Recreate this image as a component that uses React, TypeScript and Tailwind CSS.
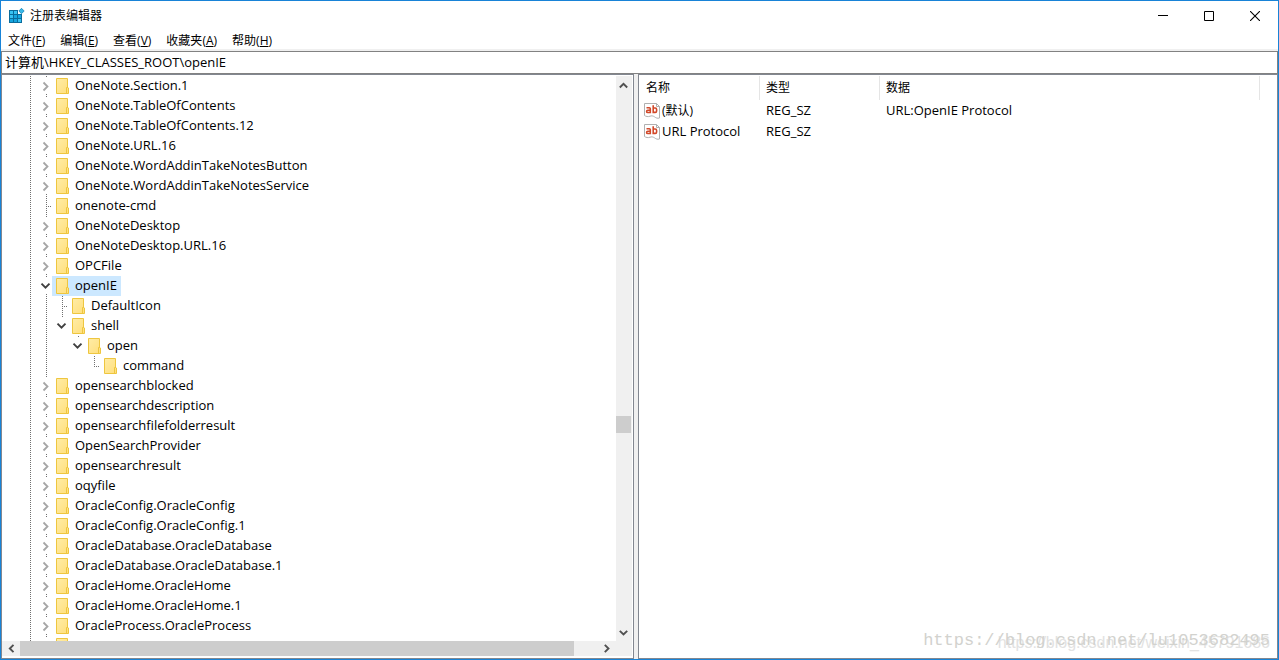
import React from 'react'

type Rail = 'line' | 'tee' | 'elbow' | 'closed' | 'open' | 'lastOpen' | 'blank'

interface KeyNode {
  name: string
  rails: Rail[]
  selected?: boolean
}

const closed = (name: string): KeyNode => ({ name, rails: ['closed'] })

const nodes: KeyNode[] = [
  closed('OneNote.Section.1'),
  closed('OneNote.TableOfContents'),
  closed('OneNote.TableOfContents.12'),
  closed('OneNote.URL.16'),
  closed('OneNote.WordAddinTakeNotesButton'),
  closed('OneNote.WordAddinTakeNotesService'),
  { name: 'onenote-cmd', rails: ['tee'] },
  closed('OneNoteDesktop'),
  closed('OneNoteDesktop.URL.16'),
  closed('OPCFile'),
  { name: 'openIE', rails: ['open'], selected: true },
  { name: 'DefaultIcon', rails: ['line', 'tee'] },
  { name: 'shell', rails: ['line', 'lastOpen'] },
  { name: 'open', rails: ['line', 'blank', 'lastOpen'] },
  { name: 'command', rails: ['line', 'blank', 'blank', 'elbow'] },
  closed('opensearchblocked'),
  closed('opensearchdescription'),
  closed('opensearchfilefolderresult'),
  closed('OpenSearchProvider'),
  closed('opensearchresult'),
  closed('oqyfile'),
  closed('OracleConfig.OracleConfig'),
  closed('OracleConfig.OracleConfig.1'),
  closed('OracleDatabase.OracleDatabase'),
  closed('OracleDatabase.OracleDatabase.1'),
  closed('OracleHome.OracleHome'),
  closed('OracleHome.OracleHome.1'),
  closed('OracleProcess.OracleProcess'),
  closed(''),
]

const menus = [
  { label: '文件', hotkey: 'F' },
  { label: '编辑', hotkey: 'E' },
  { label: '查看', hotkey: 'V' },
  { label: '收藏夹', hotkey: 'A' },
  { label: '帮助', hotkey: 'H' },
]

const values = [
  { name: '(默认)', type: 'REG_SZ', data: 'URL:OpenIE Protocol', cjk: true },
  { name: 'URL Protocol', type: 'REG_SZ', data: '', cjk: false },
]

const railPaths: Record<Rail, string> = {
  line: 'M10.5 0V20',
  tee: 'M10.5 0V20M12 10.5H16',
  elbow: 'M10.5 0V11M12 10.5H16',
  closed: 'M10.5 0V2M10.5 18V20',
  open: 'M10.5 0V2M10.5 18V20',
  lastOpen: 'M10.5 0V2',
  blank: '',
}

function RailCell({ rail }: { rail: Rail }) {
  return (
    <svg width="16" height="20" viewBox="0 0 16 20" className="shrink-0" fill="none" aria-hidden="true">
      <path d={railPaths[rail]} stroke="#707070" strokeDasharray="1 1" shapeRendering="crispEdges" />
      {rail === 'closed' && <path d="M7.5 6.5 11.5 10.5 7.5 14.5" stroke="#a6a6a6" strokeWidth="1.8" />}
      {(rail === 'open' || rail === 'lastOpen') && (
        <path d="M5.5 7.7 9.5 11.7 13.5 7.7" stroke="#404040" strokeWidth="1.9" />
      )}
    </svg>
  )
}

function FolderIcon() {
  return (
    <svg width="13" height="16" viewBox="0 0 13 16" className="shrink-0" aria-hidden="true">
      <defs>
        <linearGradient id="folder" x1="0" y1="0" x2="1" y2="1">
          <stop offset="0" stopColor="#ffeca6" />
          <stop offset="1" stopColor="#ffdf7c" />
        </linearGradient>
      </defs>
      <path d="M.5 .5H11.5V9.5L12.5 10V15.5H.5Z" fill="url(#folder)" stroke="#eec63f" />
      <path d="M10.5 15.5V9.5H12" fill="none" stroke="#eec63f" />
    </svg>
  )
}

function StringIcon() {
  return (
    <svg width="16" height="16" viewBox="0 0 16 16" className="shrink-0" aria-hidden="true">
      <path
        d="M.5 .5H12.5L15.5 3.5V15C13.5 15.6 12 15 10.5 13.8C9 12.8 7.5 12.6 6 13.2C4 14 2 13.5 .5 12.5Z"
        fill="#fff"
        stroke="#b0b0b0"
      />
      <path d="M12.5 .5V3.5H15.5" fill="none" stroke="#b0b0b0" />
      <g fill="none" stroke="#d2492a" strokeWidth="1.6">
        <path d="M2.5 4.8H5.3Q6.3 4.8 6.3 5.8V10.3M6.3 7.3H3.8Q2.6 7.3 2.6 8.4T3.8 9.5H6.3" />
        <path d="M9.2 2.3V10.3M9.2 5H11.2Q12.6 5 12.6 6.4V8Q12.6 9.4 11.2 9.4H9.2" />
      </g>
    </svg>
  )
}

function AppIcon() {
  return (
    <svg width="16" height="16" viewBox="0 0 16 16" aria-hidden="true">
      <path d="M0 2H9V6H13V15H0Z" fill="#0a6c9c" />
      <g fill="#37c2f2">
        <path d="M1 3H4V6H1ZM5 3H8V6H5ZM1 7H4V10H1ZM9 11H12V14H9Z" />
      </g>
      <g fill="#15a5df">
        <path d="M5 7H8V10H5ZM9 7H12V10H9ZM1 11H4V14H1ZM5 11H8V14H5Z" />
      </g>
      <path d="M12.5 .3 15.2 3 12.5 5.7 9.8 3Z" fill="#37b8e8" stroke="#0a79ad" strokeWidth=".7" />
    </svg>
  )
}

function Arrow({ d }: { d: string }) {
  return (
    <svg width="9" height="9" viewBox="0 0 9 9" fill="none" stroke="#505050" strokeWidth="1.9" aria-hidden="true">
      <path d={d} />
    </svg>
  )
}

function TitleBar() {
  const button = 'flex h-full w-[46px] items-center justify-center hover:bg-gray-200'
  return (
    <header className="flex h-[30px] shrink-0 items-center justify-between">
      <h1 className="flex items-center gap-[5px] pl-2 text-[12px]">
        <AppIcon />
        注册表编辑器
      </h1>
      <div className="flex h-full">
        <button className={button} aria-label="最小化">
          <svg width="10" height="10" stroke="#000"><path d="M0 4.5H10" /></svg>
        </button>
        <button className={button} aria-label="最大化">
          <svg width="10" height="10" stroke="#000" fill="none"><path d="M.5 .5H9.5V9.5H.5Z" /></svg>
        </button>
        <button className={button} aria-label="关闭">
          <svg width="10" height="10" stroke="#000"><path d="M0 0 10 10M10 0 0 10" strokeWidth="1.1" /></svg>
        </button>
      </div>
    </header>
  )
}

function KeyTree() {
  return (
    <section className="flex min-h-0 min-w-0 flex-col border border-[#828790] bg-white pt-px pr-px pb-[2px]">
      <div className="flex min-h-0 flex-1">
        <ul role="tree" className="min-w-0 flex-1 overflow-hidden pl-[18px] text-[13px]">
          {nodes.map((node, i) => (
            <li key={i} role="treeitem" aria-selected={!!node.selected} className="flex h-5 whitespace-nowrap">
              <RailCell rail="line" />
              {node.rails.map((rail, j) => (
                <RailCell key={j} rail={rail} />
              ))}
              <span className={`flex items-center gap-[6px] px-1 ${node.selected ? 'bg-[#cce8ff]' : ''}`}>
                <FolderIcon />
                <span className="pb-[2px] leading-[18px]">{node.name}</span>
              </span>
            </li>
          ))}
        </ul>
        <div className="flex w-4 shrink-0 flex-col bg-[#f0f0f0] pr-px">
          <button className="flex h-[18px] items-center justify-center" aria-label="向上滚动">
            <Arrow d="M.8 6.5 4.5 2.8 8.2 6.5" />
          </button>
          <div className="grow-[61]" />
          <div className="h-[17px] bg-[#cdcdcd]" />
          <div className="grow-[36]" />
          <button className="flex h-[18px] items-center justify-center" aria-label="向下滚动">
            <Arrow d="M.8 2.8 4.5 6.5 8.2 2.8" />
          </button>
        </div>
      </div>
      <div className="flex h-[15px] shrink-0 bg-[#f0f0f0] pr-[17px]">
        <button className="flex w-[18px] items-center justify-center" aria-label="向左滚动">
          <Arrow d="M6.5 .8 2.8 4.5 6.5 8.2" />
        </button>
        <div className="flex-1">
          <div className="h-full w-[96%] bg-[#cdcdcd]" />
        </div>
        <button className="flex w-[18px] items-center justify-center" aria-label="向右滚动">
          <Arrow d="M2.8 .8 6.5 4.5 2.8 8.2" />
        </button>
      </div>
    </section>
  )
}

function ValueList() {
  const head = 'border-r border-[#e5e5e5] text-left text-[12px] font-normal'
  return (
    <section className="min-w-0 overflow-hidden border border-[#828790] bg-white pt-px pr-[17px]">
      <table className="w-full table-fixed border-separate border-spacing-0 text-[13px]">
        <colgroup>
          <col className="w-[121px]" />
          <col className="w-[120px]" />
          <col />
        </colgroup>
        <thead>
          <tr className="h-6">
            <th className={`${head} pl-[7px]`}>名称</th>
            <th className={`${head} pl-[6px]`}>类型</th>
            <th className={`${head} pl-[6px]`}>数据</th>
          </tr>
        </thead>
        <tbody>
          {values.map((value) => (
            <tr key={value.name} className="h-[21px] leading-[21px] whitespace-nowrap">
              <td className="pl-[5px]">
                <span className={`flex items-center gap-[2px] ${value.cjk ? 'text-[12px]' : ''}`}>
                  <StringIcon />
                  {value.name}
                </span>
              </td>
              <td className="pl-[6px]">{value.type}</td>
              <td className="pl-[6px]">{value.data}</td>
            </tr>
          ))}
        </tbody>
      </table>
    </section>
  )
}

export default function App() {
  return (
    <div className="relative flex h-screen flex-col border border-[#1883d7] bg-white font-['Open_Sans','Noto_Sans_CJK_SC',sans-serif] text-black">
      <TitleBar />
      <nav className="flex h-[18px] shrink-0 items-center gap-[15px] pt-[2px] pl-[7px] text-[12px] leading-4">
        {menus.map(({ label, hotkey }) => (
          <button key={hotkey}>
            {label}(<span className="underline">{hotkey}</span>)
          </button>
        ))}
      </nav>
      <div className="shrink-0 bg-[#f0f0f0] pt-[2px]">
        <input
          aria-label="地址"
          defaultValue="计算机\HKEY_CLASSES_ROOT\openIE"
          className="block h-[23px] w-full border border-[#828282] bg-white px-[3px] pb-[2px] text-[13px] outline-none"
        />
      </div>
      <main className="grid min-h-0 flex-1 grid-cols-[633fr_4px_640fr] grid-rows-[minmax(0,1fr)] bg-[#f0f0f0]">
        <KeyTree />
        <div className="cursor-col-resize" />
        <ValueList />
      </main>
      <div className="pointer-events-none absolute right-2 bottom-2 grid items-end justify-items-end whitespace-nowrap">
        <span className="col-start-1 row-start-1 font-['Liberation_Sans',sans-serif] text-[16px] leading-4 text-[#e2e2e2]">
          https://blog.csdn.net/weixin_45791686
        </span>
        <span className="col-start-1 row-start-1 font-['Liberation_Mono',monospace] text-[17px] leading-5 text-[#d2d2ce]">
          https://blog.csdn.net/lu1053682495
        </span>
      </div>
    </div>
  )
}
